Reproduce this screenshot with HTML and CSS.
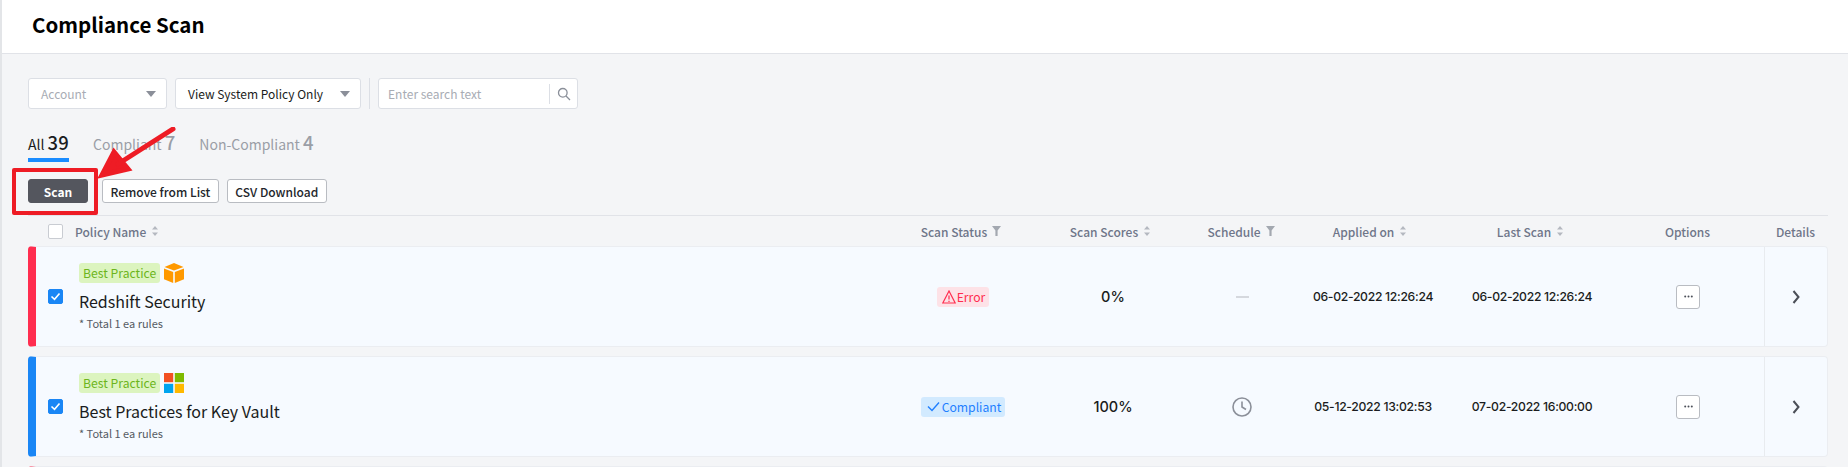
FILE: index.html
```html
<!DOCTYPE html>
<html lang="en">
<head>
<meta charset="utf-8">
<title>Compliance Scan</title>
<link rel="stylesheet" href="styles.css">
</head>
<body>
<div class="page">
  <header class="top"><h1>Compliance Scan</h1></header>
  <main class="main">
    <div class="filters">
      <div class="select account"><span class="ph">Account</span><i class="caret"></i></div>
      <div class="select policy"><span>View System Policy Only</span><i class="caret"></i></div>
      <div class="vr"></div>
      <div class="search"><span class="ph">Enter search text</span>
        <span class="search-btn"><svg width="14" height="14" viewBox="0 0 14 14" fill="none" stroke="#8a8f99" stroke-width="1.3"><circle cx="5.8" cy="5.8" r="4.3"/><path d="M9 9l4 4"/></svg></span>
      </div>
    </div>
    <div class="tabs">
      <div class="tab active">All <b>39</b></div>
      <div class="tab">Compliant <b>7</b></div>
      <div class="tab">Non-Compliant <b>4</b></div>
    </div>
    <div class="actions">
      <button class="btn primary">Scan</button>
      <button class="btn">Remove from List</button>
      <button class="btn">CSV Download</button>
    </div>
    <div class="table">
      <div class="grid thead">
        <div class="c-name"><span class="cb"></span><span>Policy Name</span><svg class="sort" width="8" height="12" viewBox="0 0 8 12"><path d="M4 1l3 3.5H1zM4 11L1 7.500h6z" fill="#b4b8c0"/></svg></div>
        <div>Scan Status<svg class="filt" width="9" height="10" viewBox="0 0 9 10"><path d="M0 0h9L5.600 4.500V10H3.400V4.500z" fill="#a3a8b0"/></svg></div>
        <div>Scan Scores<svg class="sort" width="8" height="12" viewBox="0 0 8 12"><path d="M4 1l3 3.5H1zM4 11L1 7.500h6z" fill="#b4b8c0"/></svg></div>
        <div>Schedule<svg class="filt" width="9" height="10" viewBox="0 0 9 10"><path d="M0 0h9L5.600 4.500V10H3.400V4.500z" fill="#a3a8b0"/></svg></div>
        <div>Applied on<svg class="sort" width="8" height="12" viewBox="0 0 8 12"><path d="M4 1l3 3.5H1zM4 11L1 7.500h6z" fill="#b4b8c0"/></svg></div>
        <div>Last Scan<svg class="sort" width="8" height="12" viewBox="0 0 8 12"><path d="M4 1l3 3.5H1zM4 11L1 7.500h6z" fill="#b4b8c0"/></svg></div>
        <div class="h-options">Options</div>
        <div>Details</div>
      </div>

      <div class="grid row err">
        <div class="c-name">
          <span class="cb on"><svg width="11" height="9" viewBox="0 0 11 9" fill="none" stroke="#fff" stroke-width="1.600"><path d="M1.500 4.500l3 2.800 5-5.800"/></svg></span>
          <div class="info">
            <div class="tags"><span class="tag">Best Practice</span>
              <svg class="logo" width="20" height="20" viewBox="0 0 20 20"><path d="M10 0l9.500 4L10 7.600.5 4z" fill="#ff9900"/><path d="M0 5.400l9.200 3.500V20L0 16.200z" fill="#ff9900"/><path d="M20 5.400l-9.200 3.500V20L20 16.200z" fill="#ff9900"/></svg>
            </div>
            <div class="title">Redshift Security</div>
            <div class="sub">* Total 1 ea rules</div>
          </div>
        </div>
        <div><span class="badge b-err"><svg width="14" height="14" viewBox="0 0 14 14" fill="none" stroke="#ff2d4f" stroke-width="1.200"><path d="M7 1L.8 13h12.400zM7 5.500v4M7 10.800v1.200"/></svg>Error</span></div>
        <div class="num">0%</div>
        <div><span class="dash"></span></div>
        <div class="num sm">06-02-2022 12:26:24</div>
        <div class="num sm">06-02-2022 12:26:24</div>
        <div><span class="more"><svg width="9" height="3" viewBox="0 0 9 3" fill="#4b4f58"><circle cx="1.200" cy="1.500" r="1"/><circle cx="4.500" cy="1.500" r="1"/><circle cx="7.800" cy="1.500" r="1"/></svg></span></div>
        <div class="det"><svg width="8" height="14" viewBox="0 0 8 14" fill="none" stroke="#4b4f58" stroke-width="2"><path d="M1.500 1l5 6-5 6"/></svg></div>
      </div>

      <div class="grid row ok">
        <div class="c-name">
          <span class="cb on"><svg width="11" height="9" viewBox="0 0 11 9" fill="none" stroke="#fff" stroke-width="1.600"><path d="M1.500 4.500l3 2.800 5-5.800"/></svg></span>
          <div class="info">
            <div class="tags"><span class="tag">Best Practice</span>
              <svg class="logo" width="20" height="20" viewBox="0 0 18 18"><rect width="8.300" height="8.300" fill="#f25022"/><rect x="9.700" width="8.300" height="8.300" fill="#7fba00"/><rect y="9.700" width="8.300" height="8.300" fill="#00a4ef"/><rect x="9.700" y="9.700" width="8.300" height="8.300" fill="#ffb900"/></svg>
            </div>
            <div class="title">Best Practices for Key Vault</div>
            <div class="sub">* Total 1 ea rules</div>
          </div>
        </div>
        <div><span class="badge b-ok"><svg width="13" height="11" viewBox="0 0 13 11" fill="none" stroke="#1f7fff" stroke-width="1.400"><path d="M1 5.500l4 4 7-8"/></svg>Compliant</span></div>
        <div class="num">100%</div>
        <div><svg width="20" height="20" viewBox="0 0 20 20" fill="none" stroke="#8b8f99" stroke-width="1.600"><circle cx="10" cy="10" r="9"/><path d="M10 4.500V10l4 2.500"/></svg></div>
        <div class="num sm">05-12-2022 13:02:53</div>
        <div class="num sm">07-02-2022 16:00:00</div>
        <div><span class="more"><svg width="9" height="3" viewBox="0 0 9 3" fill="#4b4f58"><circle cx="1.200" cy="1.500" r="1"/><circle cx="4.500" cy="1.500" r="1"/><circle cx="7.800" cy="1.500" r="1"/></svg></span></div>
        <div class="det"><svg width="8" height="14" viewBox="0 0 8 14" fill="none" stroke="#4b4f58" stroke-width="2"><path d="M1.500 1l5 6-5 6"/></svg></div>
      </div>

      <div class="grid row err"></div>
    </div>
  </main>
  <div class="mark"></div>
  <svg class="arrow" width="90" height="60" viewBox="0 0 90 60"><path d="M75 2L20 37M4 48l26-6-14-17z" stroke="#ee1c25" stroke-width="5" fill="#ee1c25" stroke-linecap="round"/></svg>
</div>
</body>
</html>
```
FILE: styles.css
```css
* { box-sizing: border-box; }
html, body { margin: 0; height: 467px; overflow: hidden; }
body { font-family: "Noto Sans CJK KR", "Noto Sans", sans-serif; background: #f4f5f7; color: #1a1c20; }
.page { position: relative; height: 467px; border-left: 2px solid #e3e5e8; overflow: hidden; }
.top { height: 54px; background: #fff; border-bottom: 1px solid #e1e3e8; padding: 0 0 5px 30px; display: flex; align-items: center; }
.top h1 { margin: 0; font-size: 20.500px; font-weight: 700; color: #000; line-height: 1; }
.main { padding: 24px 0 0 26px; width: 1826px; }
.filters { display: flex; align-items: center; height: 31px; font-size: 12px; }
.select { height: 31px; background: #fff; border: 1px solid #dcdfe5; border-radius: 3px; display: flex; align-items: center; justify-content: space-between; padding: 0 10px 0 12px; }
.account { width: 139px; }
.policy { width: 186px; margin-left: 8px; }
.ph { color: #a8acb4; }
.caret { width: 0; height: 0; border-left: 5.500px solid transparent; border-right: 5.500px solid transparent; border-top: 6px solid #8b8f99; }
.vr { width: 1px; height: 31px; background: #dcdfe5; margin: 0 8px; }
.search { width: 200px; height: 31px; background: #fff; border: 1px solid #dcdfe5; border-radius: 3px; display: flex; align-items: center; justify-content: space-between; padding-left: 9px; }
.search-btn { width: 28px; height: 20px; border-left: 1px solid #dcdfe5; display: flex; align-items: center; justify-content: center; }
.tabs { display: flex; gap: 24px; margin-top: 20px; height: 33px; font-size: 14px; color: #9a9ea6; }
.tab { height: 33px; line-height: 31px; white-space: nowrap; }
.tab b { font-weight: 500; font-size: 18.500px; line-height: 1; }
.tab.active { color: #1a1c20; border-bottom: 4px solid #1a8cff; width: 41px; }
.actions { display: flex; align-items: center; margin-top: 17px; height: 24px; gap: 8px; }
.btn { font: 500 12px "Noto Sans CJK KR", "Noto Sans", sans-serif; height: 24px; padding: 0 7.500px; background: #fff; color: #23262b; border: 1px solid #b9bcc2; border-radius: 3px; white-space: nowrap; }
.btn.primary { width: 60px; background: #54565e; border-color: #54565e; color: #fff; font-weight: 700; margin-right: 6px; }
.table { margin-top: 12px; border-top: 1px solid #e1e3e8; width: 1800px; }
.grid { display: grid; align-items: center; justify-items: center; }
.grid > div { width: 100%; display: flex; align-items: center; justify-content: center; white-space: nowrap; }
.grid > .c-name { justify-content: flex-start; }
.thead { grid-template-columns: 860px 146px 153px 108px 150px 171px 147px 65px; height: 30px; font-size: 12px; font-weight: 500; color: #6f7689; }
.thead .c-name .cb { margin-right: 12px; }
.grid > .h-options { padding-right: 4px; }
.sort { margin-left: 5px; }
.filt { margin-left: 5px; }
.cb { width: 15px; height: 15px; margin-left: 20px; background: #fff; border: 1px solid #c9ccd2; border-radius: 2px; display: inline-flex; align-items: center; justify-content: center; flex: none; }
.cb.on { background: #1a86f5; border-color: #1a86f5; }
.row { grid-template-columns: 854px 146px 154px 104px 158px 160px 152px 63px; height: 101px; background: #f6faff; border: 1px solid #ebedf1; border-left: 8px solid #ff2d4f; border-radius: 4px; margin-bottom: 9px; }
.row.ok { border-left-color: #1a86f5; }
.row .cb { margin-left: 12px; }
.info { margin-left: 16px; display: flex; flex-direction: column; }
.tags { display: flex; align-items: center; gap: 4px; height: 20px; }
.tag { height: 20px; line-height: 20px; padding: 0 4px; font-size: 12.200px; background: #dcf4bf; color: #6cb51c; border-radius: 3px; }
.title { font-size: 16px; line-height: 24px; margin-top: 6px; color: #1a1c20; }
.sub { font-size: 11px; line-height: 16px; margin-top: 2px; color: #555a63; }
.badge { height: 20px; display: inline-flex; align-items: center; gap: 1px; padding: 0 4px 0 5px; border-radius: 3px; font-size: 12.200px; }
.b-err { background: #fde2e7; color: #ff2d4f; }
.b-ok { background: #d2eaff; color: #1f7fff; padding: 0 4px 0 6px; gap: 2px; }
.num { font-family: "Inter", "Noto Sans", sans-serif; font-size: 14.500px; font-weight: 500; color: #1a1c20; }
.num.sm { font-size: 12.200px; letter-spacing: -0.300px; }
.dash { width: 13px; height: 2px; background: #d5d8de; }
.more { width: 24px; height: 24px; background: #fff; border: 1px solid #b9bcc2; border-radius: 3px; display: flex; align-items: center; justify-content: center; }
.grid > .det { height: 99px; border-left: 1px solid #e8ebef; }
.mark { position: absolute; left: 10px; top: 168px; width: 86px; height: 47px; border: 4px solid #ee1c25; border-radius: 2px; }
.arrow { position: absolute; left: 96px; top: 127px; }
```
